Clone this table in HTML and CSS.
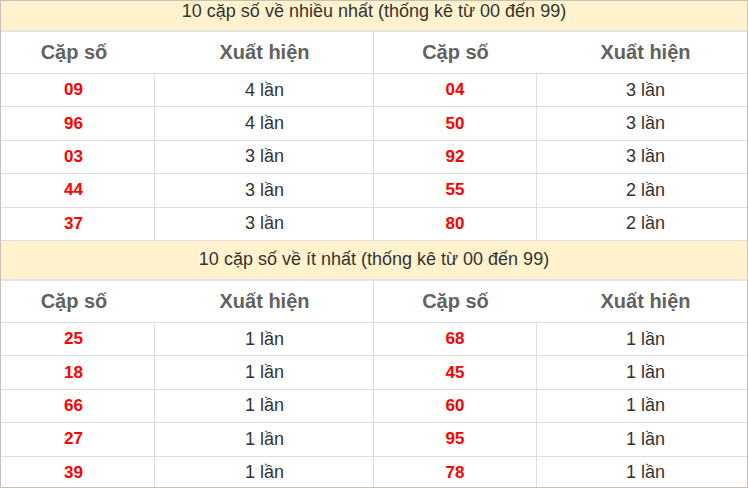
FILE: index.html
```html
<!DOCTYPE html>
<html lang="vi">
<head>
<meta charset="utf-8">
<title>Thống kê cặp số</title>
<link rel="stylesheet" href="styles.css">
</head>
<body>
<div class="board">
  <div class="title title-first">10 cặp số về nhiều nhất (thống kê từ 00 đến 99)</div>
  <div class="grid">
    <div class="hd c1">Cặp số</div><div class="hd c2">Xuất hiện</div><div class="hd c3">Cặp số</div><div class="hd c4">Xuất hiện</div>
    <div class="cell c1 num">09</div><div class="cell c2">4 lần</div><div class="cell c3 num">04</div><div class="cell c4">3 lần</div>
    <div class="cell c1 num">96</div><div class="cell c2">4 lần</div><div class="cell c3 num">50</div><div class="cell c4">3 lần</div>
    <div class="cell c1 num">03</div><div class="cell c2">3 lần</div><div class="cell c3 num">92</div><div class="cell c4">3 lần</div>
    <div class="cell c1 num">44</div><div class="cell c2">3 lần</div><div class="cell c3 num">55</div><div class="cell c4">2 lần</div>
    <div class="cell c1 num">37</div><div class="cell c2">3 lần</div><div class="cell c3 num">80</div><div class="cell c4">2 lần</div>
  </div>
  <div class="title">10 cặp số về ít nhất (thống kê từ 00 đến 99)</div>
  <div class="grid">
    <div class="hd c1">Cặp số</div><div class="hd c2">Xuất hiện</div><div class="hd c3">Cặp số</div><div class="hd c4">Xuất hiện</div>
    <div class="cell c1 num">25</div><div class="cell c2">1 lần</div><div class="cell c3 num">68</div><div class="cell c4">1 lần</div>
    <div class="cell c1 num">18</div><div class="cell c2">1 lần</div><div class="cell c3 num">45</div><div class="cell c4">1 lần</div>
    <div class="cell c1 num">66</div><div class="cell c2">1 lần</div><div class="cell c3 num">60</div><div class="cell c4">1 lần</div>
    <div class="cell c1 num">27</div><div class="cell c2">1 lần</div><div class="cell c3 num">95</div><div class="cell c4">1 lần</div>
    <div class="cell c1 num">39</div><div class="cell c2">1 lần</div><div class="cell c3 num">78</div><div class="cell c4">1 lần</div>
  </div>
</div>
</body>
</html>
```
FILE: styles.css
```css
* { box-sizing: border-box; }
html, body { margin: 0; padding: 0; background: #fff; }
body { font-family: "Liberation Sans", Arial, sans-serif; color: #333; }
.board {
  width: 748px;
  height: 488px;
  border: 1px solid #c8bfb6;
  overflow: hidden;
}
.title {
  height: 40px;
  background: #fff2cc;
  border-bottom: 2px solid #e4e4e4;
  display: flex;
  align-items: center;
  justify-content: center;
  font-size: 18px;
  color: #333;
}
.title-first {
  height: 31px;
  padding-bottom: 9px;
}
.grid {
  display: grid;
  grid-template-columns: 154px 219px 163px 210px;
  grid-template-rows: 42px repeat(5, 33.4px);
}
.hd, .cell {
  display: flex;
  align-items: center;
  justify-content: center;
  border-bottom: 1px solid #dedede;
}
.hd {
  font-size: 20px;
  font-weight: bold;
  color: #626262;
}
.cell { font-size: 18px; color: #333; }
.cell.c1, .cell.c3 { border-right: 1px solid #dedede; }
.c2 { border-right: 1px solid #dedede; }
.c1 { padding-right: 8px; }
.c2 { padding-left: 1px; }
.c4 { padding-left: 7px; }
.num { color: #f00; font-weight: bold; font-size: 17px; }
```
